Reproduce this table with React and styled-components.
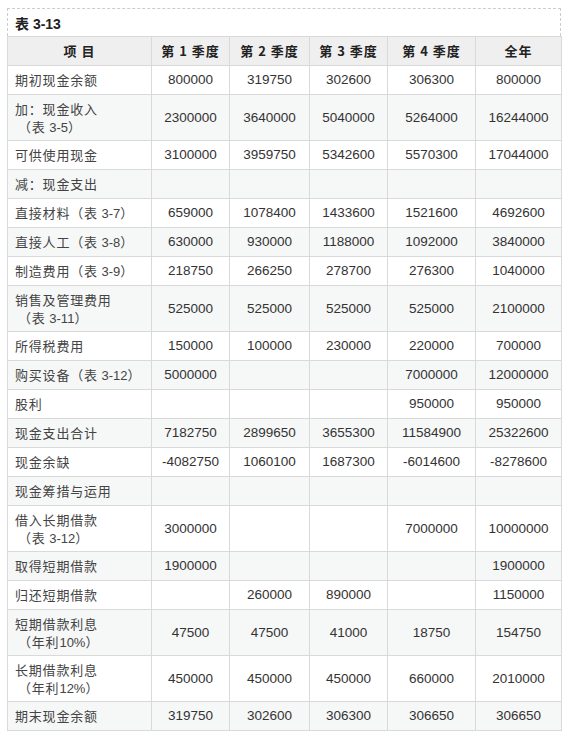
import styled, { createGlobalStyle } from "styled-components";

const GlobalStyle = createGlobalStyle`
  body {
    margin: 0;
    background: #fff;
    font-family: "Liberation Sans", "Noto Sans CJK SC", sans-serif;
    color: #333;
  }
`;

const Wrapper = styled.div`
  padding: 8px 6px 0 7px;
`;

const Caption = styled.div`
  width: 554px;
  box-sizing: border-box;
  height: 28px;
  border: 1px dashed #ccc;
  border-bottom: none;
  padding: 0 7px;
  display: flex;
  align-items: center;
  font-family: "Liberation Sans", "Noto Sans CJK SC", sans-serif;
  font-weight: 700;
  font-size: 14px;
  color: #222;
`;

const Table = styled.table`
  width: 554px;
  border-collapse: collapse;
  table-layout: fixed;
  font-size: 13px;
  line-height: 18px;
`;

const HeadCell = styled.th`
  background: #efefef;
  border: 1px solid #d9d9d9;
  padding: 5px 6px;
  font-family: "Noto Sans CJK SC", sans-serif;
  font-weight: 700;
  font-size: 13px;
  line-height: 18px;
  color: #222;
  text-align: center;
  letter-spacing: 1px;
`;

const Row = styled.tr`
  background: ${(props) => (props.striped ? "#f6f7f7" : "#fff")};
`;

const LabelCell = styled.td`
  border: 1px solid #d9d9d9;
  padding: ${(props) => (props.tall ? "5px 7px 4px" : "5px 7px")};
  font-family: "Noto Sans CJK SC", sans-serif;
  line-height: 18px;
  letter-spacing: 0.8px;
  color: #444;
  vertical-align: middle;
  white-space: nowrap;
`;

const NumCell = styled.td`
  border: 1px solid #d9d9d9;
  padding: 5px 4px;
  text-align: center;
  font-family: "Liberation Sans", sans-serif;
  font-size: 13.5px;
  line-height: 18px;
  color: #333;
  vertical-align: middle;
`;

const Num = styled.span`
  font-family: "Liberation Sans", sans-serif;
  line-height: 1;
  letter-spacing: 0;
`;

const Sub = styled.span`
  display: block;
  padding-left: 3px;
`;

const widths = [144, 78, 80, 78, 88, 86];

const headers = ["项 目", "第 1 季度", "第 2 季度", "第 3 季度", "第 4 季度", "全年"];

const rows = [
  { label: ["期初现金余额"], vals: ["800000", "319750", "302600", "306300", "800000"] },
  { label: ["加：现金收入", <>（表 <Num>3-5</Num>）</>], vals: ["2300000", "3640000", "5040000", "5264000", "16244000"] },
  { label: ["可供使用现金"], vals: ["3100000", "3959750", "5342600", "5570300", "17044000"] },
  { label: ["减：现金支出"], vals: ["", "", "", "", ""] },
  { label: [<>直接材料（表 <Num>3-7</Num>）</>], vals: ["659000", "1078400", "1433600", "1521600", "4692600"] },
  { label: [<>直接人工（表 <Num>3-8</Num>）</>], vals: ["630000", "930000", "1188000", "1092000", "3840000"] },
  { label: [<>制造费用（表 <Num>3-9</Num>）</>], vals: ["218750", "266250", "278700", "276300", "1040000"] },
  { label: ["销售及管理费用", <>（表 <Num>3-11</Num>）</>], vals: ["525000", "525000", "525000", "525000", "2100000"] },
  { label: ["所得税费用"], vals: ["150000", "100000", "230000", "220000", "700000"] },
  { label: [<>购买设备（表 <Num>3-12</Num>）</>], vals: ["5000000", "", "", "7000000", "12000000"] },
  { label: ["股利"], vals: ["", "", "", "950000", "950000"] },
  { label: ["现金支出合计"], vals: ["7182750", "2899650", "3655300", "11584900", "25322600"] },
  { label: ["现金余缺"], vals: ["-4082750", "1060100", "1687300", "-6014600", "-8278600"] },
  { label: ["现金筹措与运用"], vals: ["", "", "", "", ""] },
  { label: ["借入长期借款", <>（表 <Num>3-12</Num>）</>], vals: ["3000000", "", "", "7000000", "10000000"] },
  { label: ["取得短期借款"], vals: ["1900000", "", "", "", "1900000"] },
  { label: ["归还短期借款"], vals: ["", "260000", "890000", "", "1150000"] },
  { label: ["短期借款利息", <>（年利<Num>10%</Num>）</>], vals: ["47500", "47500", "41000", "18750", "154750"] },
  { label: ["长期借款利息", <>（年利<Num>12%</Num>）</>], vals: ["450000", "450000", "450000", "660000", "2010000"] },
  { label: ["期末现金余额"], vals: ["319750", "302600", "306300", "306650", "306650"] },
];

const App = () => (
  <Wrapper>
    <GlobalStyle />
    <Caption>表 3-13</Caption>
    <Table>
      <colgroup>
        {widths.map((w, i) => (
          <col key={i} style={{ width: w }} />
        ))}
      </colgroup>
      <thead>
        <tr>
          {headers.map((h) => (
            <HeadCell key={h}>{h}</HeadCell>
          ))}
        </tr>
      </thead>
      <tbody>
        {rows.map((r, i) => (
          <Row key={i} striped={i % 2 === 1}>
            <LabelCell tall={r.label.length > 1}>
              {r.label[0]}
              {r.label[1] && <Sub>{r.label[1]}</Sub>}
            </LabelCell>
            {r.vals.map((v, j) => (
              <NumCell key={j}>{v}</NumCell>
            ))}
          </Row>
        ))}
      </tbody>
    </Table>
  </Wrapper>
);

export default App;
